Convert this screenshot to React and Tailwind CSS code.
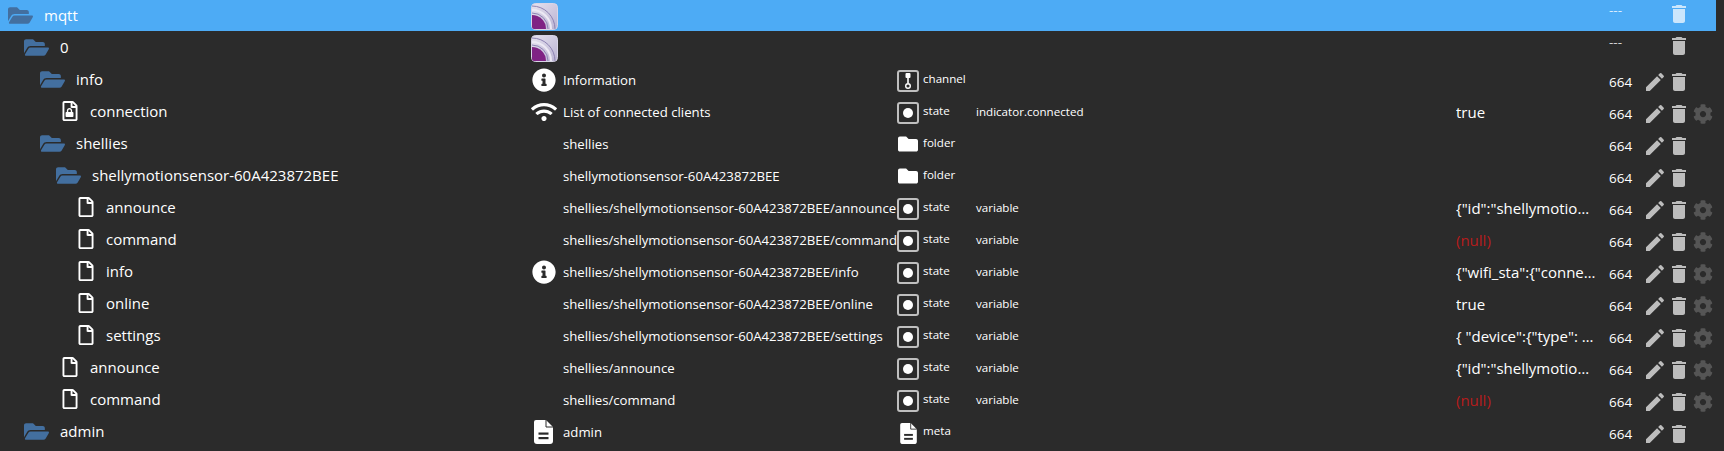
import React from 'react';
import { FaFolderOpen, FaFolder, FaRegFile, FaLock, FaInfoCircle, FaWifi, FaCog } from 'react-icons/fa';

const MqttLogo = ({ id }) => (
  <svg width="27" height="27" viewBox="0 0 27 27" className="block">
    <defs>
      <linearGradient id={id} x1="0" y1="0" x2="1" y2="1">
        <stop offset="0" stopColor="#e6e3ef" />
        <stop offset="1" stopColor="#b9b2d2" />
      </linearGradient>
    </defs>
    <rect x="0.5" y="0.5" width="26" height="26" rx="4" fill={`url(#${id})`} stroke="#d8d5e6" />
    <path d="M1 3 A23 23 0 0 1 24 26" fill="none" stroke="#8d83b3" strokeWidth="1" />
    <path d="M1 7 A19 19 0 0 1 20 26" fill="none" stroke="#ece9f4" strokeWidth="2" />
    <path d="M1 10 A16 16 0 0 1 17 26" fill="none" stroke="#8d83b3" strokeWidth="1" />
    <path d="M1 13 A13 13 0 0 1 14 26" fill="none" stroke="#ece9f4" strokeWidth="1.5" />
    <path d="M1 12 A14 14 0 0 1 15 26 L3 26 Q1 26 1 24 Z" fill="#7f2384" />
  </svg>
);

const Trash = ({ className }) => (
  <svg width="24" height="24" viewBox="0 0 24 24" fill="currentColor" className={className}>
    <path d="M6 19c0 1.1.9 2 2 2h8c1.1 0 2-.9 2-2V7H6v12zM19 4h-3.5l-1-1h-5l-1 1H5v2h14V4z" />
  </svg>
);

const Pencil = () => (
  <svg width="24" height="24" viewBox="0 0 24 24" fill="currentColor" className="text-[#bdbdbd]">
    <path d="M3 17.25V21h3.75L17.81 9.94l-3.75-3.75L3 17.25zM20.71 7.04c.39-.39.39-1.02 0-1.41l-2.34-2.34a.9959.9959 0 0 0-1.41 0l-1.83 1.83 3.75 3.75 1.83-1.83z" />
  </svg>
);

const DocIcon = ({ w, h }) => (
  <svg width={w} height={h} viewBox="0 0 19 24" className="block">
    <path d="M2 0H12L19 7V21a3 3 0 0 1-3 3H3a3 3 0 0 1-3-3V2a2 2 0 0 1 2-2Z" fill="#fff" />
    <path d="M12 0V7H19" fill="none" stroke="#2b2b2b" strokeWidth="1" />
    <rect x="4.5" y="12.5" width="10" height="2.2" fill="#2b2b2b" />
    <rect x="4.5" y="17" width="10" height="2.2" fill="#2b2b2b" />
  </svg>
);

const StateIcon = () => (
  <span className="flex h-[22px] w-[22px] items-center justify-center rounded-[3px] border-2 border-[#bfbfbf]">
    <span className="h-[10px] w-[10px] rounded-full bg-white" />
  </span>
);

const ChannelIcon = () => (
  <span className="flex h-[22px] w-[22px] items-center justify-center rounded-[3px] border-2 border-[#bfbfbf]">
    <svg width="10" height="18" viewBox="0 0 10 18">
      <rect x="2.5" y="1" width="5" height="5" rx="1" fill="#fff" />
      <rect x="4.2" y="5" width="1.6" height="6" fill="#fff" />
      <circle cx="5" cy="14" r="2.3" fill="none" stroke="#fff" strokeWidth="1.4" />
    </svg>
  </span>
);

const TreeIcon = ({ kind }) => {
  if (kind === 'folder') {
    return (
      <span className="flex w-[44px] shrink-0 items-center pl-[8px]">
        <FaFolderOpen size={25} color="#436f9f" />
      </span>
    );
  }
  return (
    <span className="relative flex w-[30px] shrink-0 items-center">
      <FaRegFile size={20} color="#fff" />
      {kind === 'locked' ? (
        <FaLock size={9} color="#fff" className="absolute left-[5px] top-[7px]" />
      ) : null}
    </span>
  );
};

const rows = [
  { level: 0, kind: 'folder', name: 'mqtt', logo: true, rights: '---', selected: true },
  { level: 1, kind: 'folder', name: '0', logo: true, rights: '---' },
  { level: 2, kind: 'folder', name: 'info', icon: 'info', title: 'Information', type: 'channel', rights: '664', edit: true },
  { level: 3, kind: 'locked', name: 'connection', icon: 'wifi', title: 'List of connected clients', type: 'state', role: 'indicator.connected', value: 'true', rights: '664', edit: true, gear: true },
  { level: 2, kind: 'folder', name: 'shellies', title: 'shellies', type: 'folder', rights: '664', edit: true },
  { level: 3, kind: 'folder', name: 'shellymotionsensor-60A423872BEE', title: 'shellymotionsensor-60A423872BEE', type: 'folder', rights: '664', edit: true },
  { level: 4, kind: 'file', name: 'announce', title: 'shellies/shellymotionsensor-60A423872BEE/announce', type: 'state', role: 'variable', value: '{"id":"shellymotionsensor-60A423872BEE"}', rights: '664', edit: true, gear: true },
  { level: 4, kind: 'file', name: 'command', title: 'shellies/shellymotionsensor-60A423872BEE/command', type: 'state', role: 'variable', value: '(null)', isNull: true, rights: '664', edit: true, gear: true },
  { level: 4, kind: 'file', name: 'info', icon: 'info', title: 'shellies/shellymotionsensor-60A423872BEE/info', type: 'state', role: 'variable', value: '{"wifi_sta":{"connected":true}}', rights: '664', edit: true, gear: true },
  { level: 4, kind: 'file', name: 'online', title: 'shellies/shellymotionsensor-60A423872BEE/online', type: 'state', role: 'variable', value: 'true', rights: '664', edit: true, gear: true },
  { level: 4, kind: 'file', name: 'settings', title: 'shellies/shellymotionsensor-60A423872BEE/settings', type: 'state', role: 'variable', value: '{ "device":{"type": "SHMOS-01"}}', rights: '664', edit: true, gear: true },
  { level: 3, kind: 'file', name: 'announce', title: 'shellies/announce', type: 'state', role: 'variable', value: '{"id":"shellymotionsensor-60A423872BEE"}', rights: '664', edit: true, gear: true },
  { level: 3, kind: 'file', name: 'command', title: 'shellies/command', type: 'state', role: 'variable', value: '(null)', isNull: true, rights: '664', edit: true, gear: true },
  { level: 1, kind: 'folder', name: 'admin', icon: 'doc', title: 'admin', type: 'meta', rights: '664', edit: true },
  // only the top edge of the next row's logo is on screen
  { level: 1, kind: 'folder', name: '', logo: true },
];

const indents = {
  folder: ['pl-0', 'pl-[16px]', 'pl-[32px]', 'pl-[48px]'],
  file: ['pl-[12px]', 'pl-[28px]', 'pl-[44px]', 'pl-[60px]', 'pl-[76px]'],
};

const TypeCell = ({ type }) => {
  if (type === 'state') return <span className="pt-[4px]"><StateIcon /></span>;
  if (type === 'channel') return <span className="pt-[4px]"><ChannelIcon /></span>;
  if (type === 'folder') return <span className="flex w-[22px] justify-center pt-[2px]"><FaFolder size={20} color="#fff" /></span>;
  if (type === 'meta') return <span className="flex w-[22px] justify-center pt-[4px]"><DocIcon w={17} h={21} /></span>;
  return null;
};

const Row = ({ row, index }) => {
  const indent = row.kind === 'folder' ? indents.folder[row.level] : indents.file[row.level];
  return (
    <div className={`flex h-[32px] w-[1716px] items-center ${row.selected ? 'bg-[#4dabf5]' : ''}`}>
      <div className={`flex w-[531px] shrink-0 items-center text-[15px] ${indent}`}>
        <TreeIcon kind={row.kind} />
        <span className="whitespace-nowrap">{row.name}</span>
      </div>
      <div className="flex w-[366px] shrink-0 items-center text-[13.2px]">
        <span className="flex w-[32px] shrink-0 items-center pt-[2px]">
          {row.logo ? <MqttLogo id={`mqtt-grad-${index}`} /> : null}
          {row.icon === 'info' ? <span className="pl-[1px]"><FaInfoCircle size={24} color="#fff" /></span> : null}
          {row.icon === 'wifi' ? <FaWifi size={26} color="#fff" /> : null}
          {row.icon === 'doc' ? <span className="pl-[3px]"><DocIcon w={19} h={24} /></span> : null}
        </span>
        <span className="whitespace-nowrap pt-[4px]">{row.title}</span>
      </div>
      <div className="flex w-[79px] shrink-0 items-center gap-[4px] text-[11.6px]">
        <TypeCell type={row.type} />
        <span>{row.type}</span>
      </div>
      <div className="w-[480px] shrink-0 pt-[2px] text-[11.6px]">{row.role}</div>
      <div className={`w-[142px] shrink-0 truncate pt-[2px] text-[15px] ${row.isNull ? 'text-[#b71c1c]' : ''}`}>{row.value}</div>
      <div className={`ml-[11px] w-[34px] shrink-0 text-[13.5px] ${row.rights === '---' ? 'pb-[10px] opacity-80' : 'pt-[7px]'}`}>{row.rights}</div>
      {row.rights ? (
        <div className={`flex flex-1 items-center ${row.edit ? 'pt-[6px]' : 'pb-[2px]'}`}>
          <span className="flex w-[24px] justify-center">{row.edit ? <Pencil /> : null}</span>
          <Trash className={row.selected ? 'text-[#cbe6fc]' : 'text-[#bdbdbd]'} />
          <span className="flex w-[24px] justify-center">{row.gear ? <FaCog size={20} color="#555" /> : null}</span>
        </div>
      ) : null}
    </div>
  );
};

export default function App() {
  return (
    <div className="h-[451px] w-[1724px] overflow-hidden bg-[#2b2b2b] text-white [font-family:'Open_Sans',sans-serif]">
      <div className="-mt-[1px]">
        {rows.map((row, i) => (
          <Row key={i} row={row} index={i} />
        ))}
      </div>
    </div>
  );
}
